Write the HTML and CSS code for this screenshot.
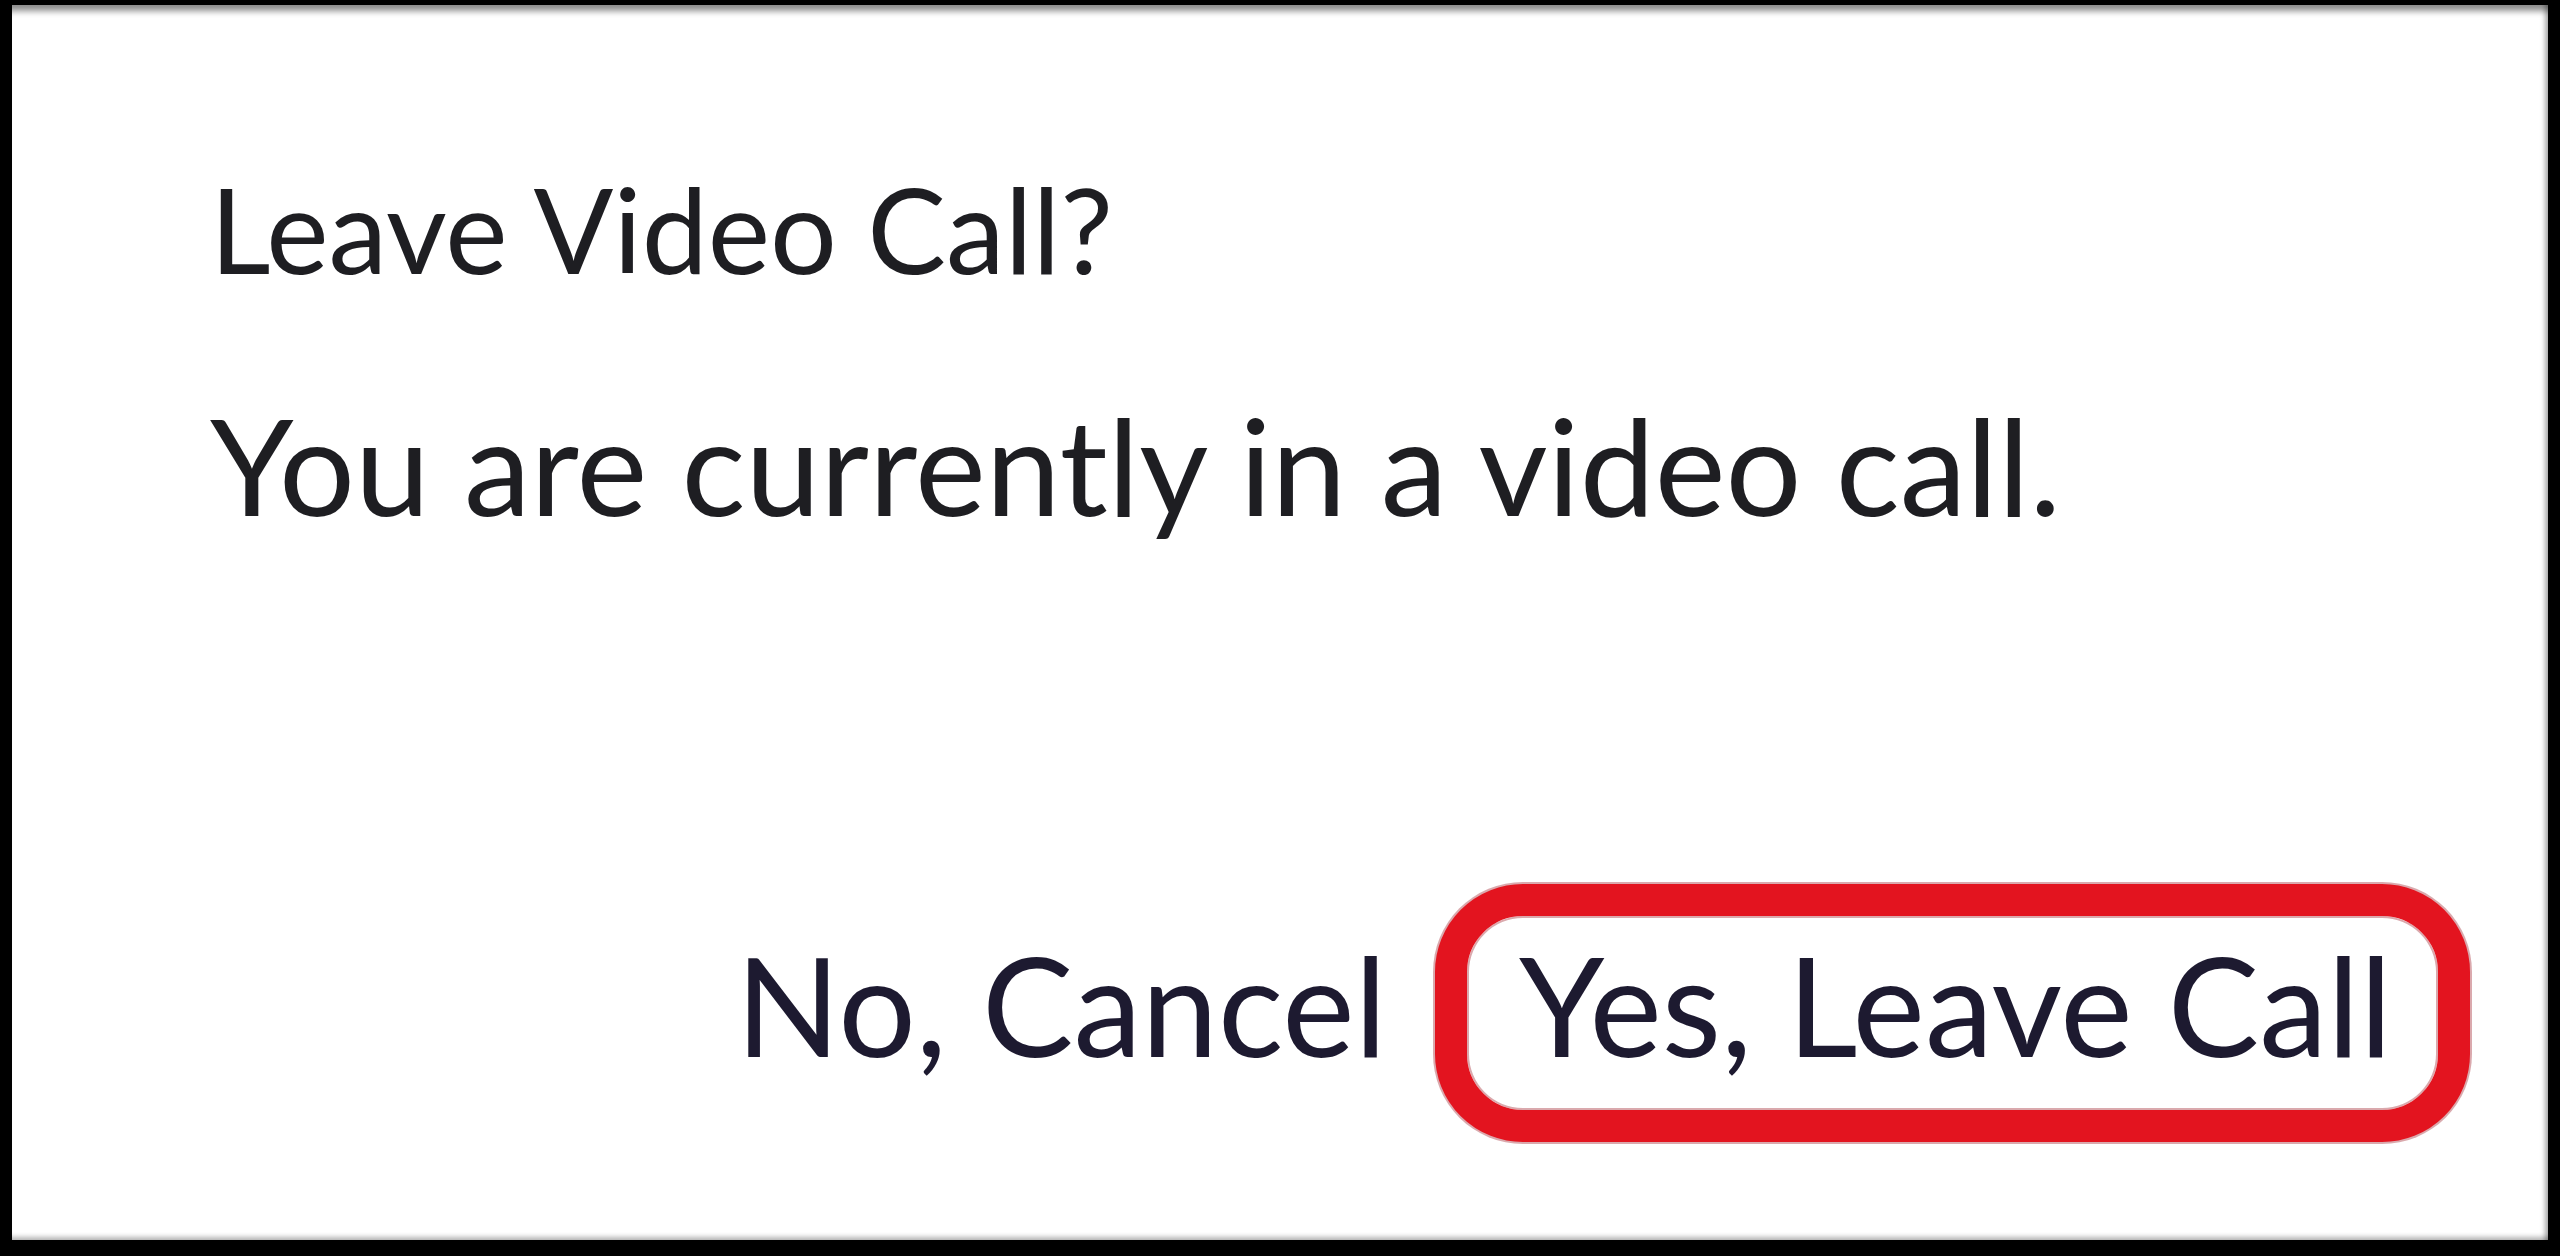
FILE: index.html
```html
<!DOCTYPE html>
<html lang="en">
<head>
    <meta charset="UTF-8">
    <meta name="viewport" content="width=device-width, initial-scale=1.0">
    <title>Leave Video Call?</title>
    <link rel="stylesheet" href="styles.css">
</head>
<body>
    <div class="dialog" role="dialog" aria-labelledby="dialogTitle">
        <h2 id="dialogTitle">Leave Video Call?</h2>
        <p class="message">You are currently in a video call.</p>
        <div class="actions">
            <button type="button" class="btn btn-cancel">No, Cancel</button>
            <button type="button" class="btn btn-leave">Yes, Leave Call</button>
        </div>
    </div>
</body>
</html>
```

FILE: styles.css
```css
html, body {
    height: 100%;
}
body {
    margin: 0;
    padding: 5px 12px 16px;
    box-sizing: border-box;
    display: flex;
    background-color: #000;
    font-family: Lato, "Liberation Sans", sans-serif;
    color: #1e1e22;
}
.dialog {
    flex: 1;
    display: flex;
    flex-direction: column;
    padding: 153px 78px 98px 198px;
    background-color: #fff;
    box-shadow: inset 0 12px 6px -6px rgba(0, 0, 0, 0.45),
                inset -8px 0 5px -5px rgba(0, 0, 0, 0.35),
                inset 0 -8px 5px -5px rgba(0, 0, 0, 0.3);
}
h2 {
    margin: 0;
    font-size: 118px;
    font-weight: 400;
    line-height: 1.2;
}
.message {
    margin: 85px 0 0;
    font-size: 134px;
    line-height: 1.2;
}
.actions {
    margin-top: auto;
    display: flex;
    justify-content: flex-end;
    align-items: center;
    gap: 48px;
}
.btn {
    font-family: inherit;
    font-size: 137px;
    line-height: 1.2;
    color: #1d1a30;
    background: #fff;
    cursor: pointer;
}
.btn-cancel {
    border: none;
    padding: 6px 0 24px;
}
.btn-leave {
    border: 32px solid #e3141f;
    border-radius: 88px;
    padding: 6px 46px 24px 52px;
    box-shadow: 0 0 0 2px rgba(150, 10, 20, 0.35),
                inset 0 0 0 2px rgba(150, 10, 20, 0.35);
}
```
